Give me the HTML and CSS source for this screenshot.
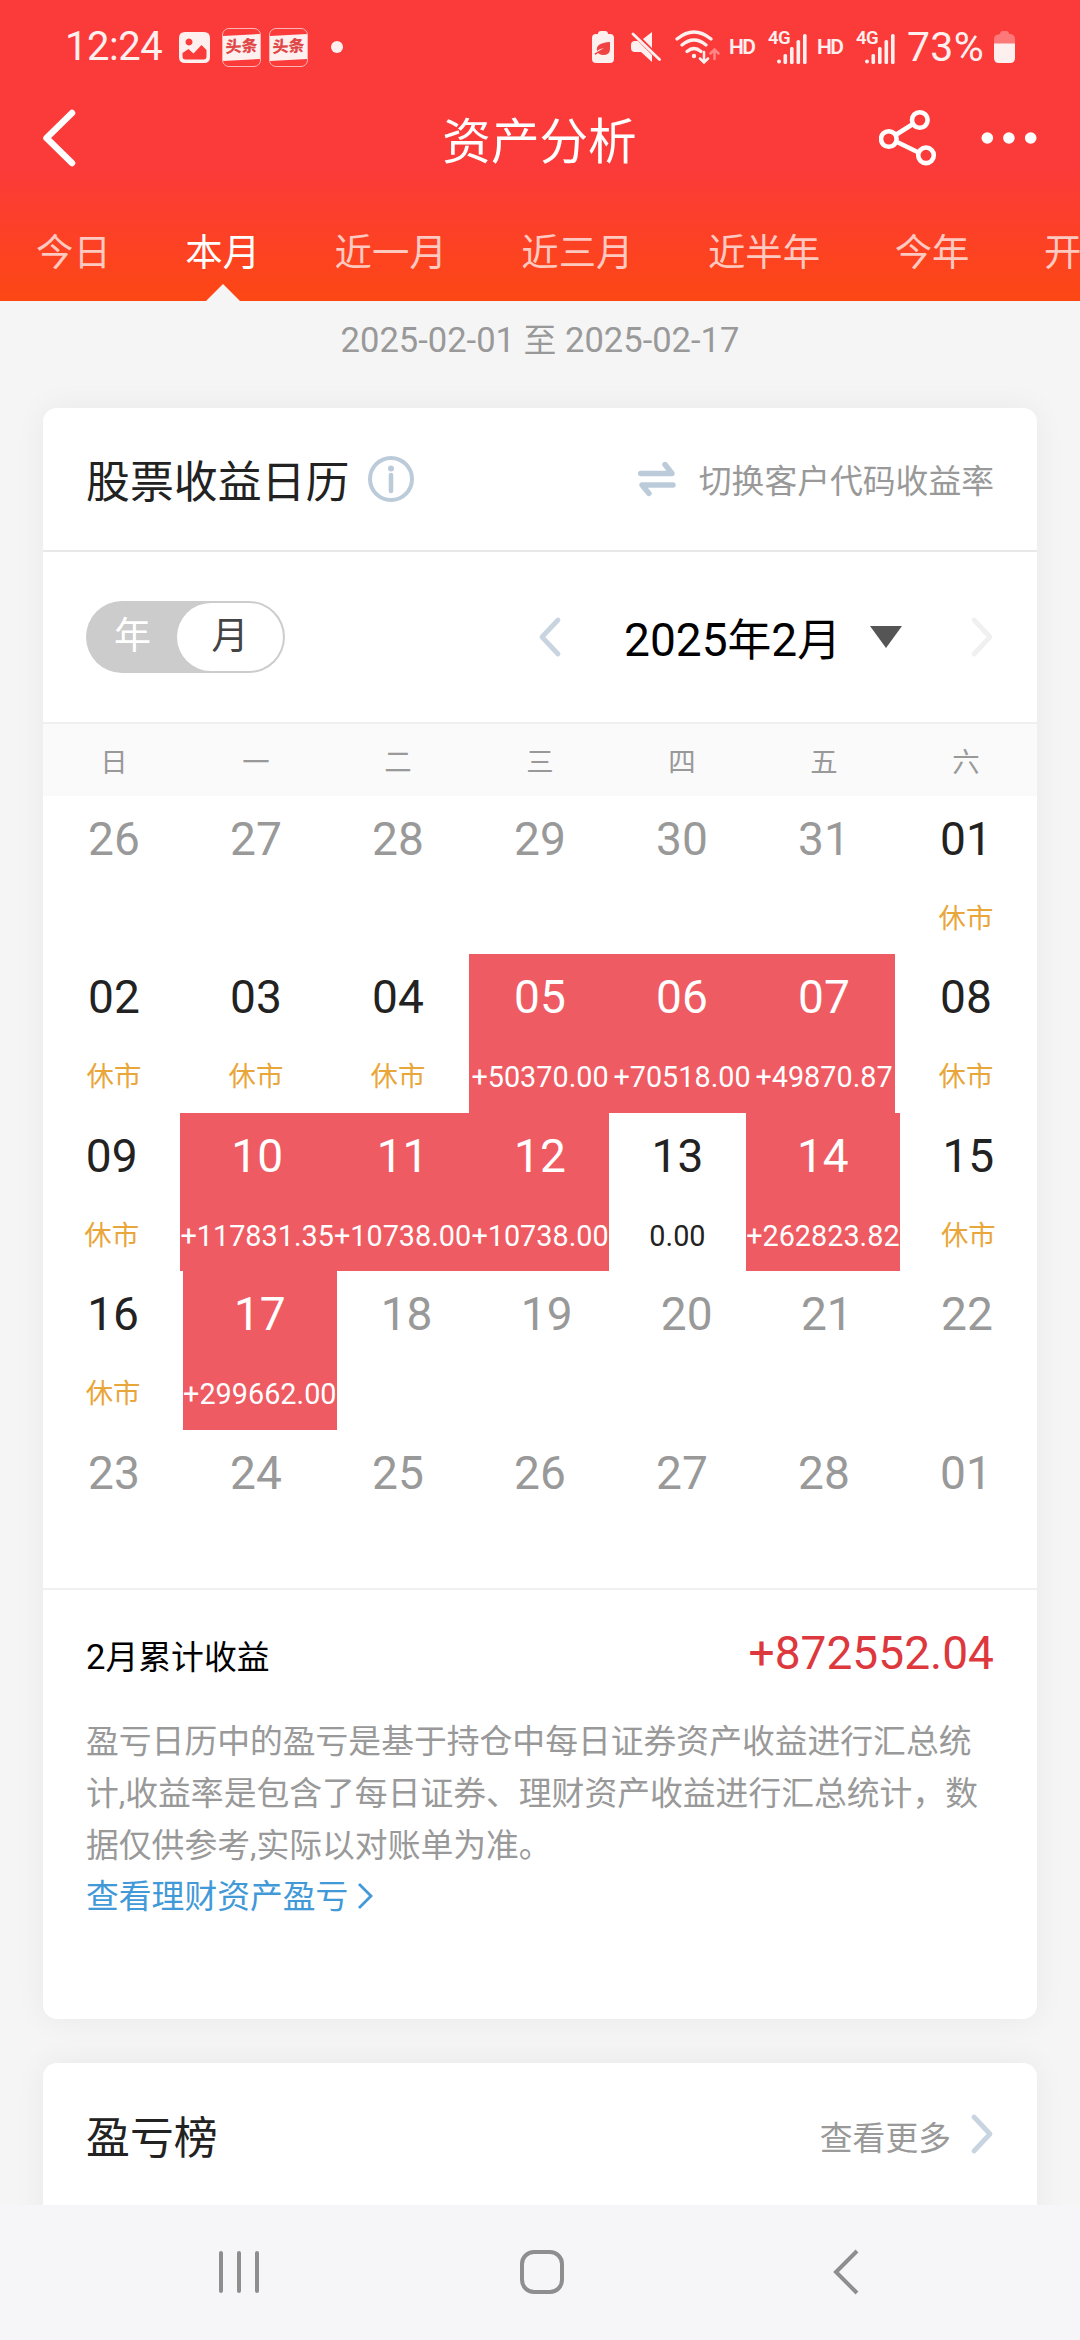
FILE: index.html
```html
<!DOCTYPE html>
<html lang="zh-CN">
<head>
<meta charset="utf-8">
<title>资产分析</title>
<link rel="stylesheet" href="styles.css">
</head>
<body>
<div class="screen">
  <header class="top">
    <div class="status">
      <div class="status-left">
        <span class="clock">12:24</span>
        <svg class="st-photo" width="31" height="31" viewBox="0 0 31 31"><path fill="#fff0f0" fill-rule="evenodd" d="M6 0H25Q31 0 31 6V25Q31 31 25 31H6Q0 31 0 25V6Q0 0 6 0ZM10 6.500a3.500 3.500 0 1 0 .01 0ZM3.500 21V24.500Q3.500 27.500 6.500 27.500H24.500Q27.500 27.500 27.500 24.500V18L22.500 13L14.500 21.500L9.500 17Z"/></svg>
        <span class="badge"><span class="badge-band">头条</span></span>
        <span class="badge"><span class="badge-band">头条</span></span>
        <span class="dot"></span>
      </div>
      <div class="status-right">
        <svg class="st-saver" width="22" height="32" viewBox="0 0 22 32"><path fill="#fff0f0" d="M6 3Q6 0 9 0H13Q16 0 16 3H18Q22 3 22 7V28Q22 32 18 32H4Q0 32 0 28V7Q0 3 4 3Z"/><path fill="#f04444" d="M18 11V18Q18 24 11 24Q8 24 6 22L3.500 24L2.500 22.500L12 17Q7 18 5 20Q3 12 18 11Z"/></svg>
        <svg class="st-mute" width="30" height="30" viewBox="0 0 30 30"><path fill="#fff0f0" d="M0 13Q0 9 4 9H7L21 23V30L10 20H4Q0 20 0 16ZM12 7L21 0V16Z"/><path stroke="#fff0f0" stroke-width="2.800" stroke-linecap="round" d="M2 2L28.500 27.500"/></svg>
        <svg class="st-wifi" width="45" height="34" viewBox="0 0 45 34" fill="none" stroke="#fff0f0" stroke-linecap="round"><path stroke-width="3.200" d="M2 9Q19 -5 36 9M7 15Q19 5 31 15M12 21.500Q19 15.500 26 21.500"/><circle cx="19" cy="26" r="2.200" fill="#fff0f0" stroke="none"/><path stroke-width="2.500" d="M29 22V32M25 28.500L29 32.500L33 28.500"/><path stroke="#fd8585" stroke-width="2.500" d="M39.500 29V20M35.500 23.500L39.500 19.500L43.500 23.500"/></svg>
        <span class="hd">HD</span>
        <span class="signal"><span class="net">4G</span><svg width="30" height="30" viewBox="0 0 30 30" fill="#fff0f0"><circle cx="2" cy="27.500" r="2"/><rect x="6.500" y="20" width="3.600" height="10" rx="1.500"/><rect x="13" y="13" width="3.600" height="17" rx="1.500"/><rect x="19.500" y="6" width="3.600" height="24" rx="1.500"/><rect x="26" y="0" width="3.600" height="30" rx="1.500"/></svg></span>
        <span class="hd">HD</span>
        <span class="signal"><span class="net">4G</span><svg width="30" height="30" viewBox="0 0 30 30" fill="#fff0f0"><circle cx="2" cy="27.500" r="2"/><rect x="6.500" y="20" width="3.600" height="10" rx="1.500"/><rect x="13" y="13" width="3.600" height="17" rx="1.500"/><rect x="19.500" y="6" width="3.600" height="24" rx="1.500"/><rect x="26" y="0" width="3.600" height="30" rx="1.500"/></svg></span>
        <span class="percent">73%</span>
        <svg class="st-batt" width="21" height="32" viewBox="0 0 21 32"><path fill="#fd7878" d="M6 3Q6 0 9 0H12Q15 0 15 3H17Q21 4 21 8V13H0V8Q0 4 4 3.500Z"/><path fill="#fff0f0" d="M0 12.500H21V27Q21 32 16 32H5Q0 32 0 27Z"/></svg>
      </div>
    </div>
    <div class="titlebar">
      <svg class="back" width="36" height="60" viewBox="0 0 36 60"><path d="M32 5L6.500 30L32 55" fill="none" stroke="#fff" stroke-width="6.500" stroke-linecap="round" stroke-linejoin="round"/></svg>
      <h1>资产分析</h1>
      <div class="actions">
        <svg width="60" height="60" viewBox="0 0 60 60" fill="none" stroke="#fff" stroke-width="4.600"><circle cx="40.800" cy="12" r="7.800"/><circle cx="9.800" cy="31" r="7.800"/><circle cx="47" cy="47.300" r="7.800"/><path d="M16.500 27L34 16M17 33.500L39.500 44.500"/></svg>
        <svg width="60" height="12" viewBox="0 0 60 12" fill="#fff"><circle cx="8.300" cy="6" r="5.800"/><circle cx="29.900" cy="6" r="5.800"/><circle cx="51.700" cy="6" r="5.800"/></svg>
      </div>
    </div>
    <nav class="tabs">
      <span>今日</span><span class="active">本月</span><span>近一月</span><span>近三月</span><span>近半年</span><span>今年</span><span>开</span>
    </nav>
  </header>

  <main>
    <p class="range">2025-02-01 <span class="c">至</span> 2025-02-17</p>

    <section class="card">
      <div class="card-head">
        <h2>股票收益日历</h2>
        <svg class="info" width="48" height="48" viewBox="0 0 48 48"><circle cx="24" cy="24" r="21" fill="none" stroke="#bccbd9" stroke-width="4"/><circle cx="24" cy="13.500" r="3" fill="#bccbd9"/><path d="M24 20V36" stroke="#bccbd9" stroke-width="4.600" stroke-linecap="round"/></svg>
        <svg class="swap" width="38" height="36" viewBox="0 0 38 36" fill="none" stroke="#bccbd9" stroke-width="5.400" stroke-linecap="round" stroke-linejoin="round"><path d="M2.700 12.500H34L27 3.500M35 24H4L11 32.500"/></svg>
        <span class="hint">切换客户代码收益率</span>
      </div>

      <div class="picker">
        <div class="toggle"><span>年</span><span class="on">月</span></div>
        <svg class="prev" width="24" height="42" viewBox="0 0 24 42"><path d="M20 4L4 21L20 38" fill="none" stroke="#c8d5e1" stroke-width="4.800" stroke-linecap="round" stroke-linejoin="round"/></svg>
        <div class="month">2025<span class="c">年</span>2<span class="c">月</span></div>
        <svg class="drop" width="32" height="22" viewBox="0 0 32 22"><path d="M0 0H32L16 22Z" fill="#555"/></svg>
        <svg class="next" width="24" height="42" viewBox="0 0 24 42"><path d="M4 4L20 21L4 38" fill="none" stroke="#f0f0f0" stroke-width="4.800" stroke-linecap="round" stroke-linejoin="round"/></svg>
      </div>

      <div class="week head"><span>日</span><span>一</span><span>二</span><span>三</span><span>四</span><span>五</span><span>六</span></div>
      <div class="week">
        <div class="day out"><b>26</b></div><div class="day out"><b>27</b></div><div class="day out"><b>28</b></div><div class="day out"><b>29</b></div><div class="day out"><b>30</b></div><div class="day out"><b>31</b></div><div class="day rest"><b>01</b><i>休市</i></div>
      </div>
      <div class="week">
        <div class="day rest"><b>02</b><i>休市</i></div><div class="day rest"><b>03</b><i>休市</i></div><div class="day rest"><b>04</b><i>休市</i></div><div class="day gain"><b>05</b><i>+50370.00</i></div><div class="day gain"><b>06</b><i>+70518.00</i></div><div class="day gain"><b>07</b><i>+49870.87</i></div><div class="day rest"><b>08</b><i>休市</i></div>
      </div>
      <div class="week">
        <div class="day rest"><b>09</b><i>休市</i></div><div class="day gain"><b>10</b><i>+117831.35</i></div><div class="day gain"><b>11</b><i>+10738.00</i></div><div class="day gain"><b>12</b><i>+10738.00</i></div><div class="day"><b>13</b><i>0.00</i></div><div class="day gain"><b>14</b><i>+262823.82</i></div><div class="day rest"><b>15</b><i>休市</i></div>
      </div>
      <div class="week">
        <div class="day rest"><b>16</b><i>休市</i></div><div class="day gain"><b>17</b><i>+299662.00</i></div><div class="day out"><b>18</b></div><div class="day out"><b>19</b></div><div class="day out"><b>20</b></div><div class="day out"><b>21</b></div><div class="day out"><b>22</b></div>
      </div>
      <div class="week">
        <div class="day out"><b>23</b></div><div class="day out"><b>24</b></div><div class="day out"><b>25</b></div><div class="day out"><b>26</b></div><div class="day out"><b>27</b></div><div class="day out"><b>28</b></div><div class="day out"><b>01</b></div>
      </div>

      <div class="summary">
        <div class="total"><span class="label">2<span class="c">月累计收益</span></span><span class="sum">+872552.04</span></div>
        <p class="note">盈亏日历中的盈亏是基于持仓中每日证券资产收益进行汇总统计,收益率是包含了每日证券、理财资产收益进行汇总统计，数据仅供参考,实际以对账单为准。</p>
        <a class="link">查看理财资产盈亏<svg width="16" height="28" viewBox="0 0 16 28"><path d="M2 2L14 14L2 26" fill="none" stroke="#4199d8" stroke-width="2.800"/></svg></a>
      </div>
    </section>

    <section class="card ranking">
      <div class="card-head">
        <h2>盈亏榜</h2>
        <span class="hint more">查看更多</span>
        <svg class="go" width="24" height="42" viewBox="0 0 24 42"><path d="M4 4L20 21L4 38" fill="none" stroke="#c8d5e1" stroke-width="4.800" stroke-linecap="round" stroke-linejoin="round"/></svg>
      </div>
    </section>
  </main>

  <footer class="navbar">
    <svg width="44" height="46" viewBox="0 0 44 46" stroke="#8e8e8e" stroke-width="4" stroke-linecap="round"><path d="M4 3V41M22 3V41M40 3V41"/></svg>
    <svg class="home" width="46" height="46" viewBox="0 0 46 46"><rect x="3" y="2" width="40" height="40" rx="12" fill="none" stroke="#8e8e8e" stroke-width="4"/></svg>
    <svg width="30" height="48" viewBox="0 0 30 48"><path d="M26 2L5 23L26 44" fill="none" stroke="#8e8e8e" stroke-width="4"/></svg>
  </footer>
</div>
</body>
</html>
```
FILE: styles.css
```css
* { box-sizing: border-box; }
body, h1, h2, p { margin: 0; }
h1, h2, b { font-weight: 400; }
i { font-style: normal; }
svg { display: block; flex: none; }
body { background: #f5f5f5; font-family: Roboto, "Noto Sans CJK SC", sans-serif; color: #222; }

.screen { width: 1080px; height: 2340px; overflow: hidden; display: flex; flex-direction: column; }

/* red header */
.top { height: 301px; flex: none; background: linear-gradient(#fb3a3a 0, #fb3a3a 165px, #fd4714 301px); color: #fff; overflow: hidden; }

.status { height: 94px; display: flex; justify-content: space-between; padding: 0 65px 0 65px; color: #fff0f0; }
.status-left, .status-right { display: flex; align-items: center; }
.clock { width: 114px; font-size: 40px; line-height: 94px; letter-spacing: -.5px; }
.badge { width: 39px; height: 39px; margin-left: 12px; border: 1.500px solid #ffb5b5; border-radius: 7px; display: flex; align-items: center; overflow: hidden; }
.badge + .badge { margin-left: 8px; }
.badge-band { width: 100%; height: 25px; line-height: 24px; background: #fff0f0; color: #e04848; font-size: 16px; font-weight: 900; text-align: center; transform: skewY(-3deg); }
.dot { width: 12px; height: 12px; border-radius: 50%; background: #fff0f0; margin-left: 23px; }
.st-mute { margin-left: 17px; }
.st-wifi { margin-left: 14px; }
.hd { width: 27px; margin-left: 9px; font-size: 21px; font-weight: 600; line-height: 94px; letter-spacing: -1.500px; }
.signal { width: 39px; height: 34px; margin: 0 0 0 12px; display: flex; justify-content: flex-end; align-items: flex-end; position: relative; }
.net { position: absolute; left: 0; top: 0; font-size: 18.500px; font-weight: 600; line-height: 16px; letter-spacing: -.5px; }
.signal + .hd { margin-left: 10px; }
.percent { width: 87px; margin-left: 12px; font-size: 41px; line-height: 94px; letter-spacing: .3px; }

.titlebar { height: 88px; padding: 0 41px 0 40px; display: grid; grid-template-columns: 1fr auto 1fr; align-items: center; }
.back, .actions { margin-top: -1px; }
h1 { font-size: 48.600px; line-height: 60px; padding-top: 10px; }
.actions { display: flex; justify-content: flex-end; align-items: center; gap: 40px; }

.tabs { height: 119px; padding: 0 36px; display: flex; gap: 74.500px; font-size: 37.400px; line-height: 142px; color: rgba(255,255,255,.72); white-space: nowrap; }
.tabs span { flex: none; }
.tabs .active { color: #fff; display: flex; flex-direction: column; align-items: center; }
.tabs .active::after { content: ""; margin-top: -40px; border: 17px solid transparent; border-top: 0; border-bottom-color: #f5f5f5; }

main { flex: 1; min-height: 0; overflow: hidden; }
.range { height: 107px; line-height: 79px; font-size: 34.560px; text-align: center; color: #999; }
.c { font-size: .95em; }

.card { width: 994px; margin: 0 auto 44px; background: #fff; border-radius: 14px; box-shadow: 0 0 32px rgba(0,0,0,.055); }
.card-head { height: 144px; padding: 0 43px; display: flex; align-items: center; border-bottom: 2px solid #e8e8e8; }
h2 { font-size: 43.900px; line-height: 60px; padding-top: 7px; }
.info { margin-left: 18px; }
.swap { margin-left: auto; margin-right: 23px; }
.hint { font-size: 32.800px; line-height: 50px; padding-top: 6px; color: #999; }

.picker { height: 170px; padding: 0 43px; display: flex; align-items: center; }
.toggle { width: 199px; height: 72px; padding: 2px; border-radius: 36px; background: #ccc; display: flex; color: #fff; font-size: 37px; line-height: 67px; text-align: center; }
.toggle span { flex: 1; }
.toggle .on { flex: none; width: 106px; border-radius: 34px; background: #fff; color: #444; }
.prev { margin-left: 253px; }
.month { width: 215px; margin-left: 62px; font-size: 46.080px; line-height: 60px; padding-top: 7px; color: #000; white-space: nowrap; }
.drop { margin-left: 31px; }
.next { margin-left: auto; }

.week { height: 158.400px; display: flex; }
.week.head { height: 74px; border-top: 2px solid #f0f0f0; background: #fafafa; color: #999; font-size: 27.400px; line-height: 79px; text-align: center; }
.week.head span { flex: 1; }
.day { flex: 1; display: flex; flex-direction: column; align-items: center; }
.day b { font-size: 46.080px; line-height: 86px; }
.day i { font-size: 28.800px; line-height: 75px; }
.out { color: #999; }
.rest i { color: #e9a63a; font-size: 27.400px; }
.gain { background: #ef5b62; color: #fff; }

.summary { height: 431px; border-top: 2px solid #f0f0f0; padding: 0 43px; }
.total { height: 126px; display: flex; justify-content: space-between; color: #000; }
.label { font-size: 34.560px; line-height: 134px; }
.sum { font-size: 46.080px; line-height: 126px; color: #dc383e; }
.note { font-size: 32.800px; line-height: 52px; color: #999; }
.link { display: flex; align-items: center; gap: 9px; font-size: 32.800px; line-height: 52px; color: #4199d8; margin-top: -1px; }
.link svg { margin-top: -2px; }

.ranking { height: 240px; }
.ranking .card-head { height: 146px; border: 0; }
.ranking .go { margin-top: -3px; }
.more { margin-left: auto; margin-right: 19px; }

.navbar { height: 135px; flex: none; background: #f6f6f8; display: flex; justify-content: space-between; align-items: center; padding: 0 219px 0 217px; }
.home { margin-right: 9px; }
```
